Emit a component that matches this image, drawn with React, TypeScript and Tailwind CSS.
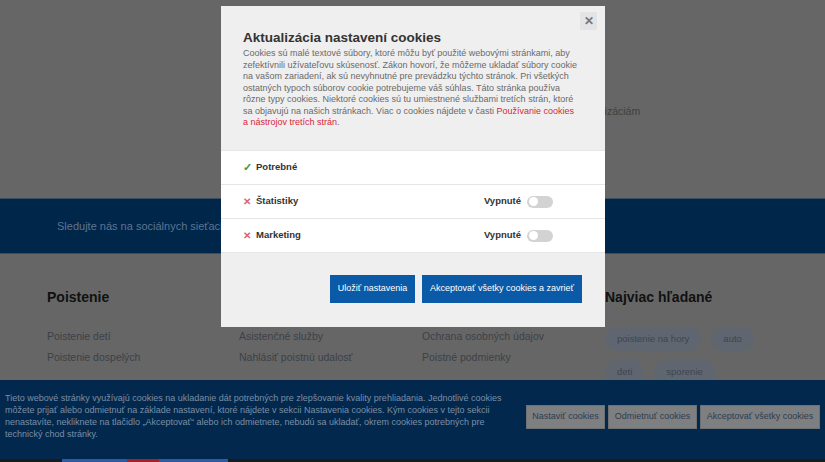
import React from 'react';

const font = { fontFamily: '"Liberation Sans", Arial, sans-serif' };

const modalLines = [
  'Cookies sú malé textové súbory, ktoré môžu byť použité webovými stránkami, aby',
  'zefektívnili užívateľovu skúsenosť. Zákon hovorí, že môžeme ukladať súbory cookie',
  'na vašom zariadení, ak sú nevyhnutné pre prevádzku týchto stránok. Pri všetkých',
  'ostatných typoch súborov cookie potrebujeme váš súhlas. Táto stránka používa',
  'rôzne typy cookies. Niektoré cookies sú tu umiestnené službami tretích strán, ktoré',
];

const bannerLines = [
  'Tieto webové stránky využívajú cookies na ukladanie dát potrebných pre zlepšovanie kvality prehliadania. Jednotlivé cookies',
  'môžete prijať alebo odmietnuť na základe nastavení, ktoré nájdete v sekcii Nastavenia cookies. Kým cookies v tejto sekcii',
  'nenastavíte, nekliknete na tlačidlo „Akceptovať“ alebo ich odmietnete, nebudú sa ukladať, okrem cookies potrebných pre',
  'technický chod stránky.',
];

const bannerButtons = [
  { label: 'Nastaviť cookies', width: 'w-[79px]' },
  { label: 'Odmietnuť cookies', width: 'w-[89px]' },
  { label: 'Akceptovať všetky cookies', width: 'w-[120px]' },
];

function Toggle() {
  return (
    <span className="flex h-[12px] w-[26px] items-center rounded-full bg-[#d3d3d3] px-[2px]">
      <span className="h-[9px] w-[9px] rounded-full bg-white" />
    </span>
  );
}

function CookieRow({ label, allowed }: { label: string; allowed?: boolean }) {
  return (
    <div className="flex h-[34px] items-center border-t border-[#e6e6e6] bg-white pl-[22px] pr-[52px]">
      {allowed ? (
        <span className="w-[13px] text-[11px] font-bold leading-none text-[#3f9b3f]">✓</span>
      ) : (
        <span className="w-[13px] text-[10px] font-bold leading-none text-[#e0607a]">✕</span>
      )}
      <span className="text-[9.5px] font-bold text-[#333]">{label}</span>
      {!allowed && (
        <div className="ml-auto flex items-center gap-[6px]">
          <span className="text-[9.5px] font-bold text-[#333]">Vypnuté</span>
          <Toggle />
        </div>
      )}
    </div>
  );
}

function FooterColumn({ title, links, width }: { title?: string; links: string[]; width: string }) {
  return (
    <div className={width}>
      <h3 className="h-[20px] text-[14px] font-bold leading-[20px] text-[#111]">{title}</h3>
      <ul className="mt-[22px] space-y-[6px]">
        {links.map((link) => (
          <li key={link} className="text-[10.5px] leading-[15px] text-[#3c4148]">
            {link}
          </li>
        ))}
      </ul>
    </div>
  );
}

export default function App() {
  return (
    <div className="relative h-[462px] w-[825px] overflow-hidden bg-[#666666]" style={font}>
      {/* Dimmed page */}
      <div className="h-[198px] pl-[569px] pt-[104px]">
        <p className="text-[10.5px] leading-[14px] text-[#3f3f3f]">a organizáciám</p>
      </div>

      <div className="flex h-[56px] items-center border-y border-[#3a4d63] bg-[#00264a] pl-[57px]">
        <p className="text-[11px] text-[#5d7591]">Sledujte nás na sociálnych sieťach</p>
      </div>

      <div className="flex pl-[47px] pt-[33px]">
        <FooterColumn width="w-[192px]" title="Poistenie" links={['Poistenie detí', 'Poistenie dospelých']} />
        <FooterColumn width="w-[183px]" links={['Asistenčné služby', 'Nahlásiť poistnú udalosť']} />
        <FooterColumn width="w-[183px]" links={['Ochrana osobných údajov', 'Poistné podmienky']} />
        <div className="flex-1">
          <h3 className="h-[20px] text-[14px] font-bold leading-[20px] text-[#111]">Najviac hľadané</h3>
          <div className="mt-[20px] flex w-[170px] flex-wrap gap-x-[10px] gap-y-[9px]">
            {['poistenie na hory', 'auto', 'deti', 'sporenie'].map((tag) => (
              <span
                key={tag}
                className="flex h-[24px] items-center rounded-full bg-[#5f6670] px-[12px] text-[9.5px] text-[#3d4550]"
              >
                {tag}
              </span>
            ))}
          </div>
        </div>
      </div>

      {/* Cookie banner */}
      <div className="absolute bottom-[3px] left-0 flex h-[79px] w-full bg-[#02284d] pl-[5px] pt-[12px]">
        <div className="text-[9px] leading-[12px] text-[#7b8ea5]">
          {bannerLines.map((line) => (
            <div key={line} className="whitespace-nowrap">
              {line}
            </div>
          ))}
        </div>
        <div className="absolute left-[526px] top-[25px] flex gap-[3px]">
          {bannerButtons.map((b) => (
            <button
              key={b.label}
              className={`h-[24px] ${b.width} border border-[#6e7174] bg-[#7d7f81] text-[9px] text-[#2e3d50]`}
            >
              {b.label}
            </button>
          ))}
        </div>
      </div>

      {/* Bottom strip */}
      <div className="absolute bottom-0 left-0 flex h-[3px] w-full bg-[#1b1b1b]">
        <span className="ml-[62px] h-full w-[65px] bg-[#2d5aa3]" />
        <span className="h-full w-[32px] bg-[#a3202e]" />
        <span className="h-full w-[69px] bg-[#2d5aa3]" />
      </div>

      {/* Settings modal */}
      <div className="absolute left-[221px] top-[6px] flex h-[321px] w-[384px] flex-col bg-[#efefef]">
        <button className="absolute right-[8px] top-[6px] flex h-[18px] w-[17px] items-center justify-center bg-[#e4e4e4] text-[12px] font-bold leading-none text-[#777]">
          ✕
        </button>
        <div className="h-[144px] px-[22px] pt-[24px]">
          <h2 className="text-[13.5px] font-bold leading-[16px] text-[#333]">Aktualizácia nastavení cookies</h2>
          <div className="mt-[2px] text-[9px] leading-[11.5px] text-[#6a6a6a]">
            {modalLines.map((line) => (
              <div key={line} className="whitespace-nowrap">
                {line}
              </div>
            ))}
            <div className="whitespace-nowrap">
              sa objavujú na našich stránkach. Viac o cookies nájdete v časti{' '}
              <a className="text-[#d7263d]">Používanie cookies</a>
            </div>
            <div className="whitespace-nowrap">
              <a className="text-[#d7263d]">a nástrojov tretích strán</a>.
            </div>
          </div>
        </div>

        <div className="border-b border-[#e6e6e6]">
          <CookieRow label="Potrebné" allowed />
          <CookieRow label="Štatistiky" />
          <CookieRow label="Marketing" />
        </div>

        <div className="flex justify-end gap-[7px] pr-[23px] pt-[22px]">
          <button className="h-[28px] w-[85px] bg-[#0a5aa7] text-[9px] text-white">Uložiť nastavenia</button>
          <button className="h-[28px] w-[160px] bg-[#0a5aa7] text-[9px] text-white">
            Akceptovať všetky cookies a zavrieť
          </button>
        </div>
      </div>
    </div>
  );
}
